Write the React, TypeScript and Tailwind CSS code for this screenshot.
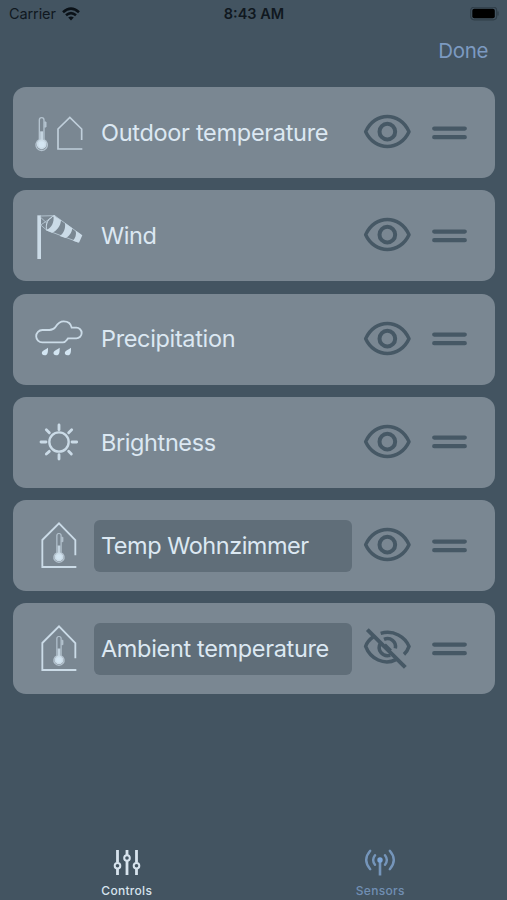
import type { ReactNode } from "react";

const Thermometer = () => (
  <g>
    <path d="M88 179V120a7 7 0 0 1 14 0V179a17 17 0 1 1-14 0Z" fill="none" stroke="#b4c3cf" strokeWidth="4" />
    <path d="M95 154v32" stroke="#c3d3df" strokeWidth="9" />
    <path d="M103 126h5v15h-5" fill="#b4c3cf" stroke="#b4c3cf" strokeWidth="3" />
    <circle cx="95" cy="193" r="12" fill="#d3e5f2" />
  </g>
);

const Glyph = ({ box, children }: { box: string; children: ReactNode }) => (
  <svg className="h-[91px] w-12 shrink-0" viewBox={box} fill="none" stroke="#cbdbe7" strokeWidth="5.500">
    {children}
  </svg>
);

const OutdoorIcon = () => (
  <Glyph box="75 21 144 273">
    <Thermometer />
    <path d="M215 180V147L179.500 112 144 147V207H217" strokeWidth="5" stroke="#c0cfdb" />
  </Glyph>
);

const WindIcon = () => (
  <Glyph box="75 16 144 273">
    <path d="M87.500 92V223" strokeWidth="11" />
    <path d="M91 94L134 93M91 97L112 117M92 121L126 98M92 121L111 137M134 93L214 151M204 172L111 137" strokeWidth="3" stroke="#b0c0cc" />
    <path d="M130 92L153 107C152 124 140 140 126 144L108 137C124 130 134 114 130 92Z" fill="#cbdbe7" stroke="none" />
    <path d="M165 115L187 131C185 146 176 157 166 160L149 154C161 146 167 133 165 115Z" fill="#cbdbe7" stroke="none" />
    <path d="M197 138L217 152 207 174 189 168C196 160 200 149 197 138Z" fill="#cbdbe7" stroke="none" />
    <path d="M134 93C140 113 127 135 111 137C104 121 114 99 134 93" strokeWidth="3" />
  </Glyph>
);

const RainIcon = () => (
  <Glyph box="75 11 144 273">
    <path d="M97 156H159C167 156 168 151 174 144H199A16 16 0 0 0 199 112H185C183 100 173 93 161 93C148 93 142 101 137 109C132 116 127 119 118 119H97A18.500 18.500 0 0 0 97 156Z" />
    {[0, 35, 69].map((x) => (
      <path key={x} transform={`translate(${x} 0)`} d="M114 172C114 184 114 195 104 195C97 195 94 190 96 185C98 180 107 178 114 172Z" fill="#d3e5f2" stroke="none" />
    ))}
  </Glyph>
);

const SunIcon = () => (
  <Glyph box="75 12 144 273">
    <circle cx="147" cy="147" r="29" strokeWidth="7" />
    <path d="M147 96v14M147 185v13M93 147h15M186 147h14M109 110l9 9M176 175l8 8M185 110l-9 9M118 175l-9 8" strokeWidth="8.500" strokeLinecap="round" />
  </Glyph>
);

const IndoorIcon = () => (
  <Glyph box="75 12 144 273">
    <path d="M196 178V132L147 82 97 132V213H199" />
    <g transform="translate(60.500 13) scale(.91 .88)">
      <Thermometer />
    </g>
  </Glyph>
);

const EyeIcon = ({ hidden }: { hidden?: boolean }) => (
  <svg className="h-[91px] w-[49px] shrink-0" viewBox="69 21 147 273" fill="none" stroke="#465865" strokeWidth="10.500">
    {hidden ? (
      <g transform="translate(0 5)">
        <path d="M122 107C162 96 195 118 207 146C204 155 200 163 192 170M99 118C88 126 80 136 77 146C91 184 133 204 168 186" />
        <path d="M132 125C151 117 170 132 166 152M122 136C110 155 125 179 151 173" />
        <path d="M134 141l18 18" />
        <path d="M82 96L196 209" strokeWidth="12" />
      </g>
    ) : (
      <>
        <path d="M77 155C104 94 180 94 207 155C180 214 104 214 77 155Z" strokeLinejoin="round" />
        <circle cx="142" cy="155" r="23.500" strokeWidth="12" />
      </>
    )}
  </svg>
);

type Row = { label: string; icon: ReactNode; editable?: boolean; hidden?: boolean; type: string };

const rows: Row[] = [
  { label: "Outdoor temperature", icon: <OutdoorIcon />, type: "tracking-[-0.3px]" },
  { label: "Wind", icon: <WindIcon />, type: "tracking-[-0.45px]" },
  { label: "Precipitation", icon: <RainIcon />, type: "tracking-[-0.35px]" },
  { label: "Brightness", icon: <SunIcon />, type: "tracking-[-0.4px]" },
  { label: "Temp Wohnzimmer", icon: <IndoorIcon />, editable: true, type: "tracking-[-0.48px]" },
  { label: "Ambient temperature", icon: <IndoorIcon />, editable: true, hidden: true, type: "tracking-[-0.34px]" },
];

export default function App() {
  return (
    <div className="flex h-[900px] w-[507px] flex-col overflow-hidden bg-[#435461] font-[Inter,sans-serif]">
      <header className="grid h-7 shrink-0 grid-cols-3 items-center pr-2 pl-[9px] text-[#101820]">
        <div className="flex items-center gap-[6px] text-[14.500px] tracking-[-0.1px]">
          Carrier
          <svg className="h-[14px] w-[18px]" viewBox="0 0 18 14" fill="none" stroke="#0b1218" strokeWidth="2.600">
            <path d="M1 5.200Q9-2 17 5.200M4 8.300Q9 4 14 8.300" />
            <path d="M6.200 10.600Q9 8.300 11.800 10.600L9 13.400Z" fill="#0b1218" stroke="none" />
          </svg>
        </div>
        <div className="text-center text-[14.500px] font-semibold whitespace-nowrap">8:43 AM</div>
        <svg className="h-[14px] w-[29px] justify-self-end" viewBox="0 0 29 14">
          <rect x=".7" y=".2" width="26" height="12.600" rx="3.500" fill="#435461" stroke="#303e49" strokeWidth="1.200" />
          <rect x="2.300" y="1.800" width="22.500" height="9.400" rx="2" fill="#000" />
          <path d="M28 4.500v4" stroke="#303e49" strokeWidth="1.300" />
        </svg>
      </header>
      <nav className="flex h-[59px] shrink-0 items-start justify-end pt-[7px] pr-[19px]">
        <button className="text-[20.500px] leading-8 tracking-[-0.35px] text-[#7c9ac1]">Done</button>
      </nav>
      <main className="flex flex-col gap-[12.300px] pr-3 pl-[13px]">
        {rows.map((row) => (
          <section key={row.label} className="flex h-[91px] items-center rounded-[13px] bg-[#7a8792] pl-[22px]">
            {row.icon}
            <div
              className={`ml-[11px] flex h-[52px] w-[258px] shrink-0 items-center rounded-md pl-[7px] text-[23.500px] whitespace-nowrap text-[#dce8f2] ${row.type} ${row.editable ? "bg-[#606e79]" : ""}`}
            >
              {row.label}
            </div>
            <div className="ml-[11px] flex">
              <EyeIcon hidden={row.hidden} />
            </div>
            <svg className="ml-[20px] h-[14px] w-[35px]" viewBox="0 0 35 14" stroke="#465865" strokeWidth="4.200" strokeLinecap="round">
              <path d="M2.200 2.600H32.800M2.200 11.200H32.800" />
            </svg>
          </section>
        ))}
      </main>
      <footer className="mt-auto flex h-[54px] text-[12px] font-medium">
        <div className="flex flex-1 flex-col items-center text-[#d7e3ed]">
          <svg className="h-[30px] w-[30px]" viewBox="0 0 30 30" fill="none" stroke="#d7e3ed" strokeWidth="2.800">
            <path d="M5.500 4v12.500M5.500 22.500V29M15 4v5M15 14.500V29M24.500 4v12.500M24.500 22.500V29" />
            <circle cx="5.500" cy="19.700" r="2.800" strokeWidth="2" />
            <circle cx="15" cy="12" r="2.800" strokeWidth="2" />
            <circle cx="24.500" cy="19.700" r="2.800" strokeWidth="2" />
          </svg>
          <span className="mt-[7px] leading-4 tracking-[0.3px]">Controls</span>
        </div>
        <div className="flex flex-1 flex-col items-center text-[#718fb3]">
          <svg className="h-[30px] w-[32px]" viewBox="0 0 32 30" fill="none" stroke="#7595ba" strokeWidth="2.400">
            <path d="M16 14V29.500" strokeWidth="2.600" />
            <circle cx="16" cy="14" r="2.700" fill="#7ba5d8" stroke="none" />
            <path d="M11 9.200Q7.300 14 11 18.800M21 9.200Q24.700 14 21 18.800M6.200 4.800Q-1.800 14 6.200 23.200M25.800 4.800Q33.800 14 25.800 23.200" strokeLinecap="round" />
          </svg>
          <span className="mt-[7px] leading-4 tracking-[0.3px]">Sensors</span>
        </div>
      </footer>
    </div>
  );
}
